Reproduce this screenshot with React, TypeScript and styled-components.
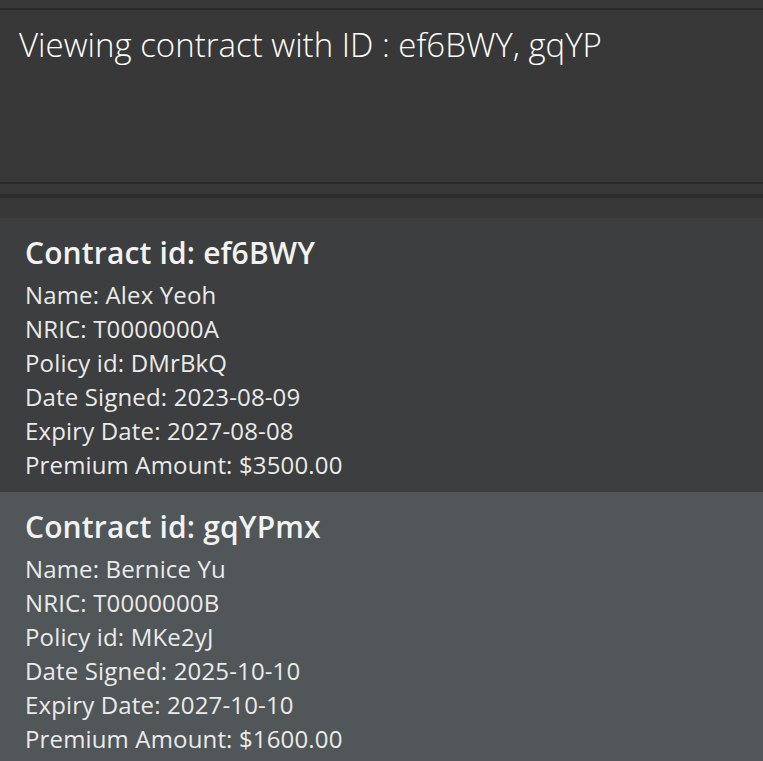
import React from "react";
import styled, { createGlobalStyle } from "styled-components";

const GlobalStyle = createGlobalStyle`
  html, body {
    margin: 0;
    padding: 0;
    background: #383838;
  }
  * { box-sizing: border-box; }
`;

const Page = styled.div`
  display: flex;
  flex-direction: column;
  width: 763px;
  background: #383838;
  padding-top: 8px;
  font-family: "Open Sans", "Noto Sans", sans-serif;
`;

const ResultDisplay = styled.div`
  height: 176px;
  border-top: 2px solid #2b2b2b;
  border-bottom: 2px solid #2b2b2b;
  background: #383838;
  padding: 15px 19px 0;
  color: #ffffff;
  font-weight: 300;
  font-size: 33px;
  line-height: 40px;
  white-space: nowrap;
`;

const Divider = styled.div`
  margin-top: 10px;
  height: 4px;
  background: #2b2b2b;
`;

const List = styled.div`
  display: flex;
  flex-direction: column;
  margin-top: 20px;
`;

const Card = styled.div<{ $alt: boolean }>`
  display: flex;
  flex-direction: column;
  background: ${(p) => (p.$alt ? "#515658" : "#3c3e3f")};
  padding: 15px 25px 10px;
`;

const Title = styled.div`
  color: #f2f2f2;
  font-weight: 600;
  font-size: 30px;
  letter-spacing: 0.15px;
  line-height: 40px;
  margin-bottom: 5px;
`;

const Detail = styled.div`
  color: #eaeaea;
  font-weight: 400;
  font-size: 24px;
  letter-spacing: 0.15px;
  line-height: 34px;
`;

type Contract = {
  id: string;
  name: string;
  nric: string;
  policy: string;
  signed: string;
  expiry: string;
  premium: string;
};

const contracts: Contract[] = [
  {
    id: "ef6BWY",
    name: "Alex Yeoh",
    nric: "T0000000A",
    policy: "DMrBkQ",
    signed: "2023-08-09",
    expiry: "2027-08-08",
    premium: "$3500.00",
  },
  {
    id: "gqYPmx",
    name: "Bernice Yu",
    nric: "T0000000B",
    policy: "MKe2yJ",
    signed: "2025-10-10",
    expiry: "2027-10-10",
    premium: "$1600.00",
  },
];

export default function App() {
  return (
    <>
      <GlobalStyle />
      <Page>
        <ResultDisplay>Viewing contract with ID : ef6BWY, gqYP</ResultDisplay>
        <Divider />
        <List>
          {contracts.map((c, i) => (
            <Card key={c.id} $alt={i % 2 === 1}>
              <Title>Contract id: {c.id}</Title>
              <Detail>Name: {c.name}</Detail>
              <Detail>NRIC: {c.nric}</Detail>
              <Detail>Policy id: {c.policy}</Detail>
              <Detail>Date Signed: {c.signed}</Detail>
              <Detail>Expiry Date: {c.expiry}</Detail>
              <Detail>Premium Amount: {c.premium}</Detail>
            </Card>
          ))}
        </List>
      </Page>
    </>
  );
}
